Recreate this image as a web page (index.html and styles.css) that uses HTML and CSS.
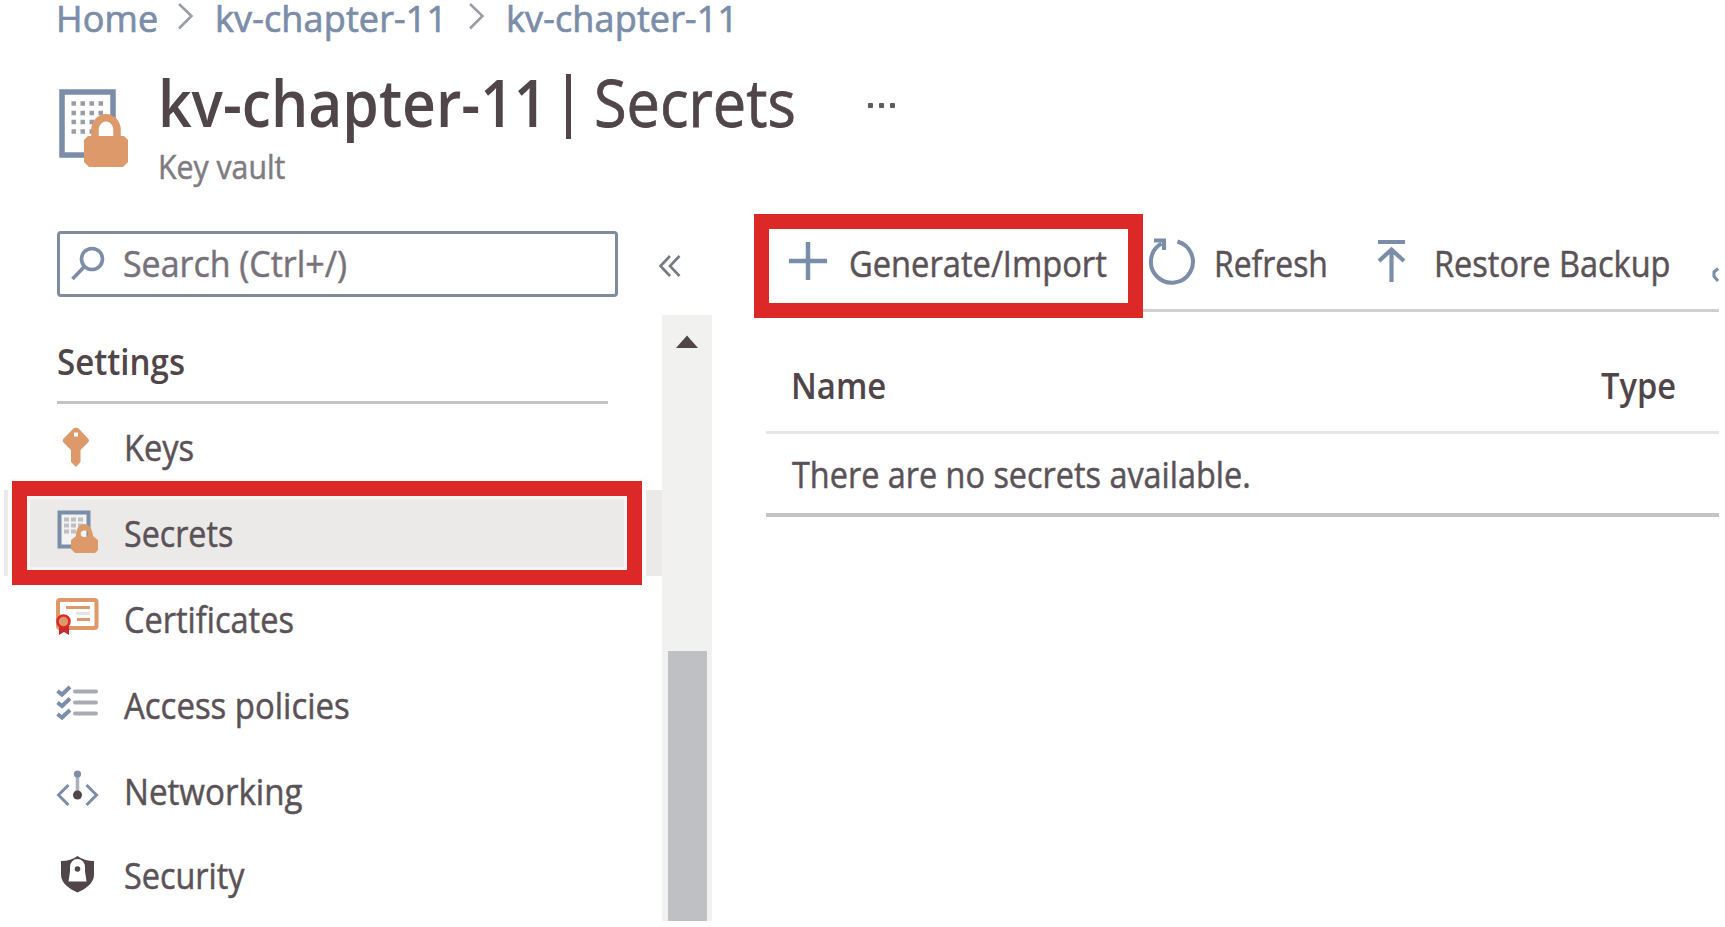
FILE: index.html
```html
<!DOCTYPE html>
<html lang="en">
<head>
<meta charset="utf-8">
<title>kv-chapter-11 | Secrets</title>
<link rel="stylesheet" href="styles.css">
</head>
<body>
<div class="page">
  <nav class="breadcrumb">
    <span class="crumb crumb-home">Home</span>
    <svg class="chevron" width="17" height="29" viewBox="0 0 17 29"><path d="M2 2L14.500 14L2 26.500"/></svg>
    <span class="crumb crumb-vault">kv-chapter-11</span>
    <svg class="chevron" width="17" height="29" viewBox="0 0 17 29"><path d="M2 2L14.500 14L2 26.500"/></svg>
    <span class="crumb">kv-chapter-11</span>
  </nav>

  <header class="header">
    <svg class="vault-icon" width="70" height="79" viewBox="0 0 70 79">
      <rect x="3" y="3" width="51" height="63" fill="#fff" stroke="#7b8da8" stroke-width="5.500"/>
      <g fill="none" stroke="#9a9ca6" stroke-width="4.500" stroke-dasharray="4.500 4.500">
        <path d="M12.500 14.500H44"/><path d="M12.500 24H44"/><path d="M12.500 33H44"/><path d="M12.500 42.500H35"/>
      </g>
      <path d="M36 50V41a10.800 12 0 0 1 22 0v9" fill="#fff" stroke="#de996a" stroke-width="7.500"/>
      <path d="M29 47H65L69 51V73L64 78H30L25 73V51Z" fill="#de996a"/>
    </svg>
    <div class="titles">
      <h1 class="title">
        <span class="title-name">kv-chapter-11</span>
        <span class="title-bar"></span>
        <span class="title-section">Secrets</span>
        <span class="dots"><i></i><i></i><i></i></span>
      </h1>
      <div class="subtitle"><span class="kind">Key vault</span></div>
    </div>
  </header>

  <div class="body">
    <aside class="sidebar">
      <div class="search-row">
        <div class="search">
          <svg width="38" height="38" viewBox="0 0 38 38"><circle cx="23" cy="14" r="10.500"/><path d="M15.500 21.500L3.500 34"/></svg>
          <span class="text t-search">Search (Ctrl+/)</span>
        </div>
        <svg class="collapse" width="24" height="24" viewBox="0 0 24 24"><path d="M12 2L2.500 12L12 22M21.500 2L12 12L21.500 22"/></svg>
      </div>
      <div class="nav">
        <div class="menu">
          <div class="group"><span class="text strong t-settings">Settings</span></div>
          <div class="item">
            <svg width="44" height="44" viewBox="0 0 44 44"><path fill="#de996a" fill-rule="evenodd" d="M20 2.500Q17.500 2.500 16 5L7.500 13.500Q6 15.500 7.500 17.500L15 25V37L20 42L24.500 37V25L32 17.500Q34 15.500 32 13.500L24 5Q22.500 2.500 20 2.500ZM18 7.500H22V11.500H18Z"/></svg>
            <span class="text t-keys">Keys</span>
          </div>
          <div class="item selected">
            <svg width="44" height="44" viewBox="0 0 44 44">
              <rect x="3.500" y="1.500" width="29" height="34" fill="#f3f3f2" stroke="#7b8da8" stroke-width="4"/>
              <path d="M8 8.500H28M8 14.500H28M8 20.500H20" stroke="#bfc0c4" stroke-width="4" stroke-dasharray="5 2"/>
              <path fill="#de996a" fill-rule="evenodd" d="M20 25C20 9 36 9 37 25L42 29V39L39 42H19L15 38V29ZM28.500 19.500A3.300 3.300 0 1 0 28.500 26A3.300 3.300 0 1 0 28.500 19.500Z"/>
            </svg>
            <span class="text t-secrets">Secrets</span>
            <span class="callout callout-item"></span>
          </div>
          <div class="item">
            <svg width="44" height="44" viewBox="0 0 44 44">
              <rect x="2" y="3" width="38.500" height="28" rx="2" fill="#fff" stroke="#de996a" stroke-width="4"/>
              <path d="M10 10.500H34M21 22.500H34" stroke="#de996a" stroke-width="3"/><path d="M20 16.500H34" stroke="#e6e4e3" stroke-width="3"/>
              <path d="M3 29H13V38L8 35L3 38Z" fill="#c92a2c"/>
              <circle cx="7.500" cy="24.500" r="6" fill="#de996a" stroke="#dc2928" stroke-width="2.500"/>
            </svg>
            <span class="text t-cert">Certificates</span>
          </div>
          <div class="item">
            <svg width="44" height="44" viewBox="0 0 44 44">
              <path d="M1.500 8L6 11.500L14 4M1.500 19.500L6 23L14 15.500M1.500 31L6 34.500L14 27" fill="none" stroke="#7b8da8" stroke-width="4"/>
              <path d="M19 8.500H40M19 19.500H40M19 30.500H40" stroke="#a9abb2" stroke-width="4" stroke-linecap="round"/>
            </svg>
            <span class="text t-access">Access policies</span>
          </div>
          <div class="item">
            <svg width="44" height="44" viewBox="0 0 44 44">
              <path d="M12.500 16L2.500 26L12.500 36M30.500 16L40.500 26L30.500 36" fill="none" stroke="#7b8da8" stroke-width="3"/>
              <path d="M21.500 6V24" stroke="#a9afbb" stroke-width="3.500"/>
              <circle cx="21.500" cy="5" r="3.600" fill="#7b8da8"/><circle cx="21.500" cy="26" r="4.500" fill="#504548"/>
            </svg>
            <span class="text t-net">Networking</span>
          </div>
          <div class="item last">
            <svg width="44" height="44" viewBox="0 0 44 44">
              <path d="M21.500 4Q28 9 38 9V23C38 31 29.500 37 21.500 40.500C13.500 37 5 31 5 23V9Q15 9 21.500 4Z" fill="#504548"/>
              <path d="M14 19.500V15a7.500 8 0 0 1 15 0V19.500L30.500 29.500H12.500Z" fill="#fff"/><circle cx="21.500" cy="17" r="2.800" fill="#504548"/>
            </svg>
            <span class="text t-security">Security</span>
          </div>
        </div>
        <div class="scrollbar">
          <svg width="24" height="14" viewBox="0 0 24 14"><path d="M12 0.500L23 13H1Z" fill="#504548"/></svg>
          <div class="thumb"></div>
        </div>
      </div>
    </aside>

    <main class="main">
      <div class="toolbar">
        <div class="command generate">
          <svg width="40" height="40" viewBox="0 0 40 40"><path d="M20 1V39M1 20H39" stroke-width="4.500"/></svg>
          <span class="text t-generate">Generate/Import</span>
          <span class="callout callout-command"></span>
        </div>
        <div class="command refresh">
          <svg width="48" height="46" viewBox="0 0 48 46"><path d="M29.500 3.500A21 21 0 1 1 13.500 5.500" stroke-width="4"/><path d="M6 2.500H16V12" stroke-width="4"/></svg>
          <span class="text t-refresh">Refresh</span>
        </div>
        <div class="command restore">
          <svg width="30" height="44" viewBox="0 0 30 44"><path d="M1 3H28M14.500 11V43M2 22L14.500 10.500L27 22" stroke-width="4.200"/></svg>
          <span class="text t-restore">Restore Backup</span>
        </div>
        <svg class="clipped" width="9" height="16" viewBox="0 0 9 16"><path d="M7 1.500L3 5V9.500L7 14" stroke-width="3"/></svg>
      </div>
      <div class="table-head">
        <span class="text strong t-name">Name</span>
        <span class="text strong t-type">Type</span>
      </div>
      <div class="table-row"><span class="text t-empty">There are no secrets available.</span></div>
    </main>
  </div>
</div>
</body>
</html>
```
FILE: styles.css
```css
* { box-sizing: border-box; }

body {
  margin: 0;
  background: #fff;
  color: #5a5257;
  font-family: "Open Sans", "Noto Sans", sans-serif;
}

svg { display: block; flex: none; overflow: visible; }

.page { width: 1719px; height: 927px; }

/* Condensed UI text: each label sets its own horizontal scale. */
.text {
  display: block;
  font-size: 36px;
  line-height: 40px;
  white-space: nowrap;
  transform-origin: 0 50%;
  transform: scaleX(0.91);
  -webkit-text-stroke: 0.5px currentColor;
}
.strong { font-weight: 600; color: #504548; -webkit-text-stroke: 0; }

.breadcrumb {
  display: flex;
  align-items: flex-start;
  height: 39px;
  padding-left: 56px;
  color: #7b8da8;
  font-size: 36px;
  line-height: 38px;
  -webkit-text-stroke: 0.7px currentColor;
}
.crumb { white-space: nowrap; letter-spacing: 0.15px; }
.crumb-home { width: 121px; }
.crumb-vault { width: 253px; }
.chevron { margin: 2px 21px 0 0; }
.chevron path { fill: none; stroke: #999ca6; stroke-width: 2.5; }

.header {
  display: flex;
  height: 145px;
  padding: 33px 0 0 59px;
}
.vault-icon { margin-top: 17px; }
.titles { padding-left: 29px; }
.title {
  display: flex;
  height: 60px;
  margin: 0;
  font-size: 65px;
  line-height: 60px;
  color: #504548;
}
.title-name {
  width: 408px;
  font-weight: 600;
  transform-origin: 0 50%;
  transform: scaleX(0.903);
  white-space: nowrap;
}
.title-bar { width: 5px; height: 65px; margin-top: 2px; background: #504548; }
.title-section {
  width: 296px;
  margin-left: 23px;
  font-weight: 400;
  transform-origin: 0 50%;
  transform: scaleX(0.915);
  -webkit-text-stroke: 0.8px currentColor;
}
.dots { display: flex; gap: 6px; padding-top: 31px; margin-left: -22px; }
.dots i { width: 5px; height: 5px; border-radius: 1px; background: #5f5a61; }
.subtitle { margin-top: 17px; }
.kind {
  display: block;
  font-size: 32px;
  line-height: 36px;
  color: #807b82;
  transform-origin: 0 50%;
  transform: scaleX(0.945);
  -webkit-text-stroke: 0.5px currentColor;
}

.body { display: flex; }

.sidebar { flex: none; width: 713px; padding-top: 47px; }
.search-row { display: flex; align-items: center; height: 66px; padding-left: 57px; }
.search {
  display: flex;
  align-items: center;
  width: 561px;
  height: 66px;
  border: 3px solid #7f8ba1;
  border-radius: 4px;
}
.search svg { margin: 0 16px 0 9px; fill: none; stroke: #7b8da8; stroke-width: 3.6; }
.collapse { margin: 4px 0 0 40px; fill: none; stroke: #767985; stroke-width: 2.6; }

.nav { display: flex; margin-top: 18px; height: 606px; }
.menu { width: 662px; padding-top: 27px; }
.group {
  height: 62px;
  margin: 0 54px 0 57px;
  border-bottom: 3px solid #c4c4c6;
}
.item {
  position: relative;
  display: flex;
  align-items: center;
  height: 86px;
  margin-left: 4px;
  padding-left: 52px;
}
.item svg { margin-right: 24px; }
.item .text { margin-top: 1px; }
.item.last { height: 80px; }
.item.last .text { margin-top: 3px; }
.selected { background: #ebeae9; }

.callout { position: absolute; border: 15px solid #dc2928; }
.callout-item {
  left: 8px;
  top: -9px;
  width: 630px;
  height: 104px;
  box-shadow: 0 0 0 4px #fdfdfd, inset 0 0 0 3px #f5f5f4;
}
.callout-command { left: -12px; top: -24px; width: 389px; height: 104px; }

.scrollbar {
  display: flex;
  flex-direction: column;
  align-items: center;
  width: 50px;
  padding-top: 20px;
  background: #f1f2f0;
}
.thumb { width: 39px; height: 270px; margin-top: 302px; background: #bfc0c4; }

.main { flex: none; width: 1006px; padding: 29px 0 0 53px; }
.toolbar {
  display: flex;
  align-items: center;
  height: 99px;
  border-bottom: 3px solid #cfcfcf;
}
.toolbar svg { fill: none; stroke: #7b8da8; }
.command { display: flex; align-items: center; flex: none; }
.command .text { margin-top: 5px; }
.generate { position: relative; width: 382px; height: 46px; padding-left: 22px; }
.generate svg { margin-right: 21px; }
.refresh { width: 229px; }
.refresh svg { margin-right: 18px; }
.restore { width: 332px; }
.restore svg { margin-right: 27px; }
.toolbar .clipped { margin: 28px 0 0 2px; }

.table-head {
  display: flex;
  justify-content: space-between;
  height: 122px;
  padding: 54px 35px 0 25px;
  border-bottom: 3px solid #e6e6e6;
}
.table-row {
  height: 83px;
  padding: 21px 0 0 26px;
  border-bottom: 4px solid #c4c4c4;
}

.t-search { transform: scaleX(0.943); color: #77727a; }
.t-settings { transform: scaleX(0.918); }
.t-keys { transform: scaleX(0.905); }
.t-secrets { transform: scaleX(0.895); }
.t-cert { transform: scaleX(0.903); }
.t-access { transform: scaleX(0.915); }
.t-net { transform: scaleX(0.92); }
.t-security { transform: scaleX(0.9); }
.t-generate { transform: scaleX(0.907); }
.t-refresh { transform: scaleX(0.885); }
.t-restore { transform: scaleX(0.903); }
.t-name { transform: scaleX(0.915); }
.t-type { transform: scaleX(0.906); }
.t-empty { transform: scaleX(0.9); }
```
